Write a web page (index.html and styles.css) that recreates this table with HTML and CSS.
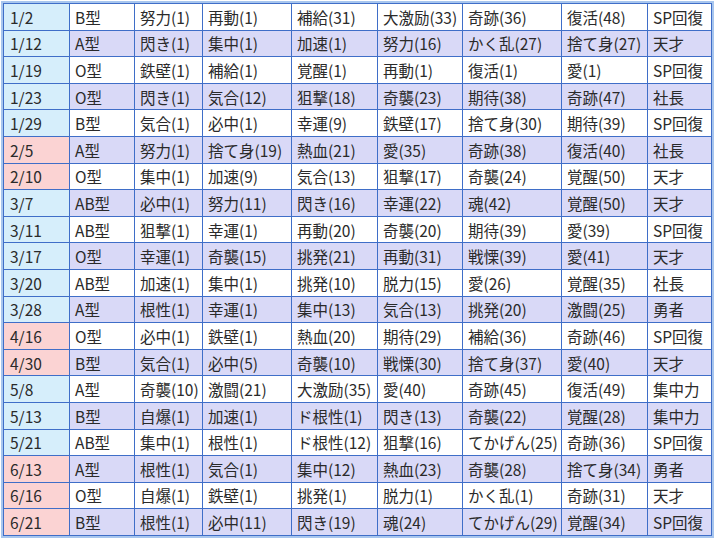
FILE: index.html
```html
<!DOCTYPE html>
<html lang="ja">
<head>
<meta charset="utf-8">
<title>スキル表</title>
<link rel="stylesheet" href="styles.css">
</head>
<body>
<div class="frame">
<table class="skills">
<colgroup>
<col class="c1"><col class="c2"><col class="c3"><col class="c4"><col class="c5"><col class="c6"><col class="c7"><col class="c8"><col class="c9">
</colgroup>
<tbody>
<tr><td class="date">1/2</td><td>B型</td><td>努力(1)</td><td>再動(1)</td><td>補給(31)</td><td>大激励(33)</td><td>奇跡(36)</td><td>復活(48)</td><td>SP回復</td></tr>
<tr><td class="date">1/12</td><td>A型</td><td>閃き(1)</td><td>集中(1)</td><td>加速(1)</td><td>努力(16)</td><td>かく乱(27)</td><td>捨て身(27)</td><td>天才</td></tr>
<tr><td class="date">1/19</td><td>O型</td><td>鉄壁(1)</td><td>補給(1)</td><td>覚醒(1)</td><td>再動(1)</td><td>復活(1)</td><td>愛(1)</td><td>SP回復</td></tr>
<tr><td class="date">1/23</td><td>O型</td><td>閃き(1)</td><td>気合(12)</td><td>狙撃(18)</td><td>奇襲(23)</td><td>期待(38)</td><td>奇跡(47)</td><td>社長</td></tr>
<tr><td class="date">1/29</td><td>B型</td><td>気合(1)</td><td>必中(1)</td><td>幸運(9)</td><td>鉄壁(17)</td><td>捨て身(30)</td><td>期待(39)</td><td>SP回復</td></tr>
<tr><td class="date pink">2/5</td><td>A型</td><td>努力(1)</td><td>捨て身(19)</td><td>熱血(21)</td><td>愛(35)</td><td>奇跡(38)</td><td>復活(40)</td><td>社長</td></tr>
<tr><td class="date pink">2/10</td><td>O型</td><td>集中(1)</td><td>加速(9)</td><td>気合(13)</td><td>狙撃(17)</td><td>奇襲(24)</td><td>覚醒(50)</td><td>天才</td></tr>
<tr><td class="date">3/7</td><td>AB型</td><td>必中(1)</td><td>努力(11)</td><td>閃き(16)</td><td>幸運(22)</td><td>魂(42)</td><td>覚醒(50)</td><td>天才</td></tr>
<tr><td class="date">3/11</td><td>AB型</td><td>狙撃(1)</td><td>幸運(1)</td><td>再動(20)</td><td>奇襲(20)</td><td>期待(39)</td><td>愛(39)</td><td>SP回復</td></tr>
<tr><td class="date">3/17</td><td>O型</td><td>幸運(1)</td><td>奇襲(15)</td><td>挑発(21)</td><td>再動(31)</td><td>戦慄(39)</td><td>愛(41)</td><td>天才</td></tr>
<tr><td class="date">3/20</td><td>AB型</td><td>加速(1)</td><td>集中(1)</td><td>挑発(10)</td><td>脱力(15)</td><td>愛(26)</td><td>覚醒(35)</td><td>社長</td></tr>
<tr><td class="date">3/28</td><td>A型</td><td>根性(1)</td><td>幸運(1)</td><td>集中(13)</td><td>気合(13)</td><td>挑発(20)</td><td>激闘(25)</td><td>勇者</td></tr>
<tr><td class="date pink">4/16</td><td>O型</td><td>必中(1)</td><td>鉄壁(1)</td><td>熱血(20)</td><td>期待(29)</td><td>補給(36)</td><td>奇跡(46)</td><td>SP回復</td></tr>
<tr><td class="date pink">4/30</td><td>B型</td><td>気合(1)</td><td>必中(5)</td><td>奇襲(10)</td><td>戦慄(30)</td><td>捨て身(37)</td><td>愛(40)</td><td>天才</td></tr>
<tr><td class="date">5/8</td><td>A型</td><td>奇襲(10)</td><td>激闘(21)</td><td>大激励(35)</td><td>愛(40)</td><td>奇跡(45)</td><td>復活(49)</td><td>集中力</td></tr>
<tr><td class="date">5/13</td><td>B型</td><td>自爆(1)</td><td>加速(1)</td><td>ド根性(1)</td><td>閃き(13)</td><td>奇襲(22)</td><td>覚醒(28)</td><td>集中力</td></tr>
<tr><td class="date">5/21</td><td>AB型</td><td>集中(1)</td><td>根性(1)</td><td>ド根性(12)</td><td>狙撃(16)</td><td>てかげん(25)</td><td>奇跡(36)</td><td>SP回復</td></tr>
<tr><td class="date pink">6/13</td><td>A型</td><td>根性(1)</td><td>気合(1)</td><td>集中(12)</td><td>熱血(23)</td><td>奇襲(28)</td><td>捨て身(34)</td><td>勇者</td></tr>
<tr><td class="date pink">6/16</td><td>O型</td><td>自爆(1)</td><td>鉄壁(1)</td><td>挑発(1)</td><td>脱力(1)</td><td>かく乱(1)</td><td>奇跡(31)</td><td>天才</td></tr>
<tr><td class="date pink">6/21</td><td>B型</td><td>根性(1)</td><td>必中(11)</td><td>閃き(19)</td><td>魂(24)</td><td>てかげん(29)</td><td>覚醒(34)</td><td>SP回復</td></tr>
</tbody>
</table>
</div>
</body>
</html>
```
FILE: styles.css
```css
html, body {
  margin: 0;
  padding: 0;
  background: #ffffff;
}
body {
  font-family: "Noto Sans CJK JP", "Noto Sans", sans-serif;
  font-size: 15.5px;
  color: #2a2a2a;
}
.frame {
  display: inline-block;
  margin: 1px 0 0 1px;
  border: 2px solid #a8c6ee;
}
.skills {
  border-collapse: collapse;
  table-layout: fixed;
  width: 709px;
}
.skills td {
  border: 1px solid #3f6ec8;
  height: 25.6px;
  padding: 0 0 0 5px;
  white-space: nowrap;
  overflow: hidden;
  vertical-align: middle;
  line-height: 20px;
}
.skills tr:nth-child(even) td {
  background: #d9d9f7;
}
.skills tr td.date {
  background: #d6eefb;
  padding-left: 6px;
}
.skills tr td.pink {
  background: #fbd3d3;
}
.c1 { width: 66px; }
.c2 { width: 65px; }
.c3 { width: 68px; }
.c4 { width: 89px; }
.c5 { width: 86px; }
.c6 { width: 85px; }
.c7 { width: 99px; }
.c8 { width: 86px; }
.c9 { width: 64px; }
```
